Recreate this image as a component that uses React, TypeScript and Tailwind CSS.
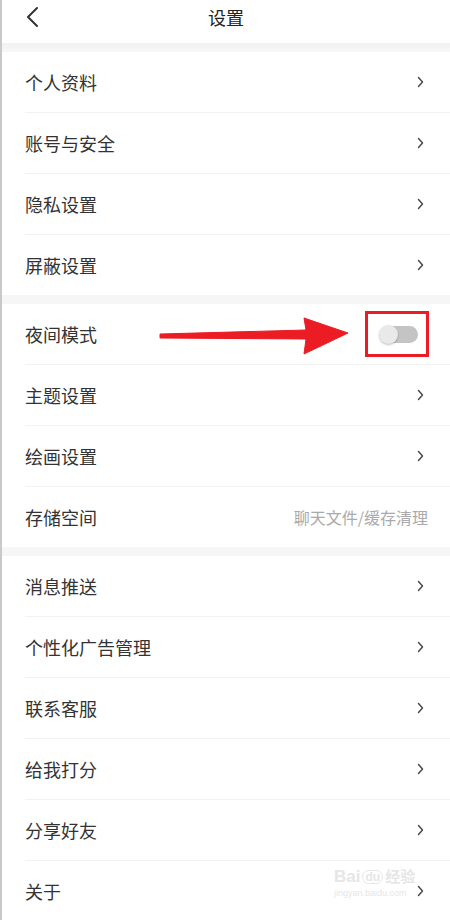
import React from "react";

const font = { fontFamily: '"Noto Sans CJK SC", "Noto Sans", sans-serif' };

function Chevron() {
  return (
    <svg width="7" height="12" viewBox="0 0 7 12" className="shrink-0">
      <path d="M1.5 1.5 L5.5 6 L1.5 10.5" fill="none" stroke="#444" strokeWidth="1.4" strokeLinecap="round" strokeLinejoin="round" />
    </svg>
  );
}

function Row({ label, right, last }: { label: string; right?: React.ReactNode; last?: boolean }) {
  return (
    <div className="pl-[23px]">
      <div className={`flex items-center justify-between pr-[26px] ${last ? "h-[60px]" : "h-[61px] border-b border-[#f2f2f2]"}`}>
        <span className="text-[18px] text-[#333] leading-none">{label}</span>
        {right ?? <Chevron />}
      </div>
    </div>
  );
}

function Band() {
  return <div className="h-[9px] bg-[#f6f6f6]" />;
}

export default function App() {
  return (
    <div className="relative w-[450px] h-[920px] overflow-hidden bg-white border-l-2 border-[#c9c9c9]" style={font}>
      <div className="h-[43px] relative flex items-center justify-center">
        <svg width="14" height="22" viewBox="0 0 14 22" className="absolute left-[23px] top-[6px]">
          <path d="M12 2 L3 11 L12 20" fill="none" stroke="#333" strokeWidth="2" strokeLinecap="round" strokeLinejoin="round" />
        </svg>
        <span className="text-[18px] text-[#222] leading-none -mt-[10px]">设置</span>
      </div>
      <div className="h-[9px] bg-gradient-to-b from-[#f1f1f1] to-[#f8f8f8]" />
      <Row label="个人资料" />
      <Row label="账号与安全" />
      <Row label="隐私设置" />
      <Row label="屏蔽设置" last />
      <Band />
      <Row
        label="夜间模式"
        right={
          <div className="relative w-[38px] h-[17px] rounded-full bg-[#c4c4c4] mr-[6px]">
            <div className="absolute -left-[1px] -top-[1px] w-[19px] h-[19px] rounded-full bg-[#e9e9e9] shadow-[0_1px_2px_rgba(0,0,0,0.25)]" />
          </div>
        }
      />
      <Row label="主题设置" />
      <Row label="绘画设置" />
      <Row label="存储空间" right={<span className="text-[16px] text-[#aaa] -mr-[4px]">聊天文件/缓存清理</span>} last />
      <Band />
      <Row label="消息推送" />
      <Row label="个性化广告管理" />
      <Row label="联系客服" />
      <Row label="给我打分" />
      <Row label="分享好友" />
      <Row label="关于" last />

      {/* annotation: arrow and red box */}
      <svg className="absolute -left-[2px] top-0 pointer-events-none" width="450" height="920" viewBox="0 0 450 920">
        <path d="M160 334 L306 330 L304 318 L348 333 L304 354 L306 339 L160 338 Z" fill="#ec1c24" stroke="#ec1c24" strokeWidth="1" strokeLinejoin="round" />
        <rect x="366.5" y="312.5" width="61" height="43" fill="none" stroke="#ec1c24" strokeWidth="3" />
      </svg>

      {/* watermark */}
      <div className="absolute left-[332px] top-[868px] pointer-events-none select-none text-[#e6e6e6]" style={{ fontFamily: '"Liberation Sans", "Noto Sans CJK SC", sans-serif' }}>
        <div className="flex items-center gap-[2px] text-[17px] font-bold leading-none">
          <span>Bai</span>
          <span className="rounded-full border border-[#e6e6e6] px-[2px] text-[12px]">du</span>
          <span className="text-[15px]">经验</span>
        </div>
        <div className="text-[9px] leading-none mt-[4px]">jingyan.baidu.com</div>
      </div>
    </div>
  );
}
